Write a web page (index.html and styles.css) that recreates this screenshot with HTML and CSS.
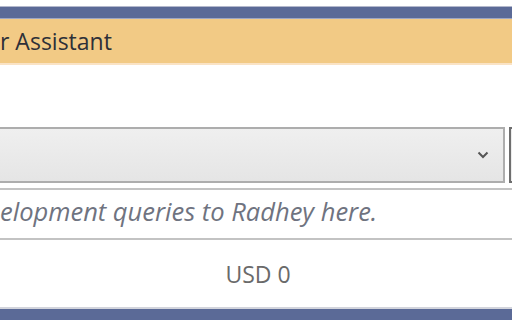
FILE: index.html
```html
<!DOCTYPE html>
<html lang="en">
<head>
    <meta charset="UTF-8">
    <meta name="viewport" content="width=device-width, initial-scale=1.0">
    <title>Assistant</title>
    <link rel="stylesheet" href="styles.css">
</head>
<body>
    <div class="window">
        <div class="frame-top"></div>
        <div class="panel-header">r Assistant</div>

        <div class="panel-body">
            <div class="select-row">
                <div class="select-box">
                    <svg class="chevron" width="12" height="8" viewBox="0 0 12 8">
                        <polyline points="1.5,1.5 6,6 10.5,1.5" fill="none" stroke="#555" stroke-width="2"/>
                    </svg>
                </div>
                <div class="side-btn"></div>
            </div>

            <div class="query-box">
                <span class="placeholder">elopment queries to Radhey here.</span>
            </div>

            <div class="cost-row">USD 0</div>
        </div>

        <div class="frame-bottom"></div>
    </div>
</body>
</html>
```

FILE: styles.css
```css
html, body {
    margin: 0;
    padding: 0;
    background: #ffffff;
    overflow: hidden;
}

.window {
    width: 512px;
    height: 320px;
    display: flex;
    flex-direction: column;
    font-family: "Open Sans", "Noto Sans", sans-serif;
    color: #333;
}

.frame-top {
    margin-top: 6px;
    height: 11px;
    background: #5b6a97;
    border-top: 1px solid #b3b8cc;
    border-bottom: 1px solid #9ea6c3;
}

.panel-header {
    height: 44px;
    line-height: 44px;
    background: #f2ca85;
    border-bottom: 2px solid #fae3c5;
    font-size: 23px;
    color: #2e3038;
    white-space: nowrap;
}

.panel-body {
    flex: 1;
    display: flex;
    flex-direction: column;
    padding-top: 62px;
}

.select-row {
    display: flex;
    gap: 4px;
    height: 56px;
    margin-left: -4px;
}

.select-box {
    width: 509px;
    flex-shrink: 0;
    box-sizing: border-box;
    border: 2px solid #adadad;
    background: linear-gradient(#efefef, #e5e5e5);
    display: flex;
    align-items: center;
    justify-content: flex-end;
    padding-right: 14px;
}

.side-btn {
    flex-shrink: 0;
    width: 20px;
    box-sizing: border-box;
    border: 2px solid #6e6e6e;
    background: #ececec;
}

.query-box {
    margin-top: 5px;
    height: 48px;
    border-top: 2px solid #c3c3c3;
    border-bottom: 2px solid #c3c3c3;
    display: flex;
    align-items: center;
}

.placeholder {
    font-style: italic;
    font-size: 25.5px;
    color: #6f7380;
    white-space: nowrap;
    padding-bottom: 6px;
}

.cost-row {
    flex: 1;
    display: flex;
    align-items: center;
    justify-content: center;
    font-size: 23px;
    color: #6a6a6a;
    padding-left: 4px;
}

.frame-bottom {
    height: 11px;
    background: #5b6a97;
    border-top: 2px solid #d2d4dc;
}
```
